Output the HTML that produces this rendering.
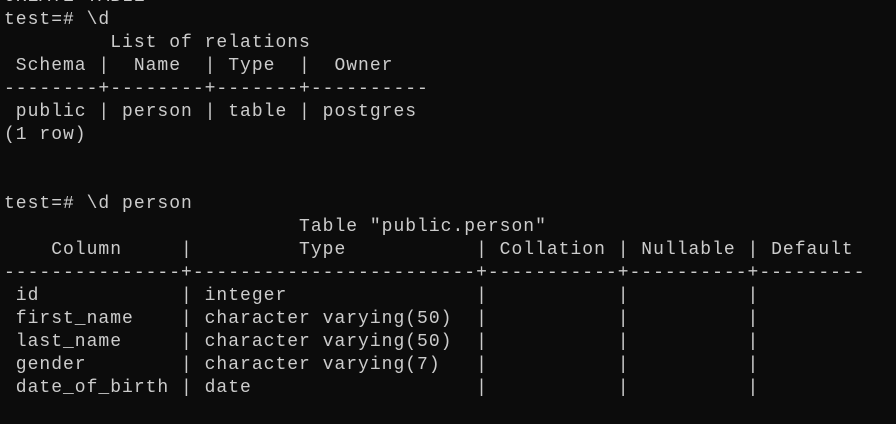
<!DOCTYPE html>
<html><head><meta charset="utf-8"><style>
html,body{margin:0;padding:0;background:#0c0c0c;width:896px;height:424px;overflow:hidden}
pre{position:absolute;left:4px;top:-14px;margin:0;font-family:"Liberation Mono","DejaVu Sans Mono",monospace;font-size:18px;letter-spacing:1px;line-height:23px;color:#cccccc;white-space:pre}
</style></head><body><pre>CREATE TABLE
test=# \d
         List of relations
 Schema |  Name  | Type  |  Owner
--------+--------+-------+----------
 public | person | table | postgres
(1 row)


test=# \d person
                         Table "public.person"
    Column     |         Type           | Collation | Nullable | Default
---------------+------------------------+-----------+----------+---------
 id            | integer                |           |          |
 first_name    | character varying(50)  |           |          |
 last_name     | character varying(50)  |           |          |
 gender        | character varying(7)   |           |          |
 date_of_birth | date                   |           |          |
</pre></body></html>
